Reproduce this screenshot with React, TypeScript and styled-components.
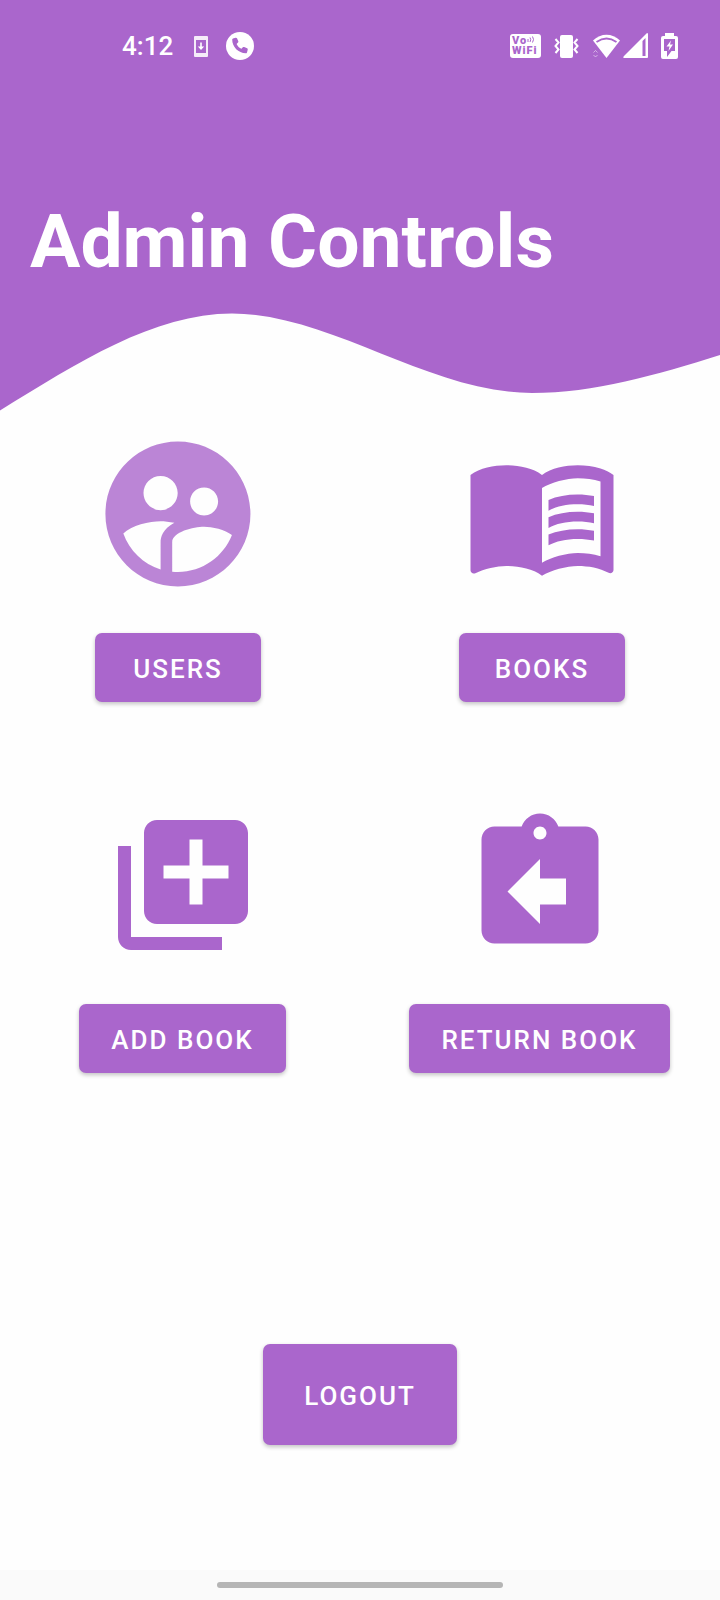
import React from "react";
import styled, { createGlobalStyle } from "styled-components";

const purple = "#aa66cc";

const GlobalStyle = createGlobalStyle`
  *, *::before, *::after { box-sizing: border-box; }
  body {
    margin: 0;
    background: #fefefe;
    font-family: Roboto, "Liberation Sans", sans-serif;
  }
`;

const Page = styled.div`
  display: flex;
  flex-direction: column;
  min-height: 100vh;
`;

const Header = styled.header`
  display: flex;
  flex-direction: column;
  background: ${purple};
  color: #fff;
`;

const StatusBar = styled.div`
  display: flex;
  justify-content: space-between;
  align-items: center;
  height: 92px;
  padding: 0 42px 0 122px;
`;

const StatusGroup = styled.div<{ $gap: number }>`
  display: flex;
  align-items: center;
  gap: ${(p) => p.$gap}px;
`;

const Clock = styled.time`
  font-size: 26px;
  line-height: 32px;
  font-weight: 500;
`;

const SignalPair = styled.div`
  display: flex;
  align-items: center;
  gap: 2px;
`;

const Glyph = styled.svg`
  display: block;
  flex: none;
`;

const VoWifi = styled.div`
  display: flex;
  flex-direction: column;
  width: 31px;
  height: 24px;
  padding: 2px 0 0 2px;
  border-radius: 3px;
  background: #fff;
  color: ${purple};
  font-size: 11px;
  line-height: 10px;
  font-weight: 900;
  letter-spacing: 1px;
`;

const VoLine = styled.div`
  display: flex;
`;

const Title = styled.h1`
  margin: 0;
  padding: 105px 30px 27px;
  font-size: 75px;
  line-height: 88px;
  font-weight: 700;
`;

const Wave = styled.svg`
  display: block;
  width: 100%;
  height: 100px;
`;

const Main = styled.main`
  display: flex;
  flex: 1;
  flex-direction: column;
  padding-top: 15px;
`;

const TileRow = styled.section<{ $gap: number; $pad: string }>`
  display: grid;
  grid-template-columns: 1fr 1fr;
  column-gap: ${(p) => p.$gap}px;
  padding: ${(p) => p.$pad};
`;

const Tile = styled.div`
  display: flex;
  flex-direction: column;
  align-items: center;
`;

const IconSlot = styled.div<{ $height: number }>`
  display: flex;
  align-items: center;
  height: ${(p) => p.$height}px;
`;

const Button = styled.button<{ $tall?: boolean; $top?: number }>`
  min-width: 166px;
  height: ${(p) => (p.$tall ? 101 : 69)}px;
  margin-top: ${(p) => p.$top ?? 0}px;
  padding: 3px ${(p) => (p.$tall ? 41 : 32)}px 0;
  border: 0;
  border-radius: 7px;
  background: ${purple};
  color: #fff;
  font-family: inherit;
  font-size: 26px;
  line-height: 32px;
  font-weight: 500;
  letter-spacing: 2px;
  text-transform: uppercase;
  box-shadow: 0 2px 4px rgba(0, 0, 0, 0.24);
  cursor: pointer;
`;

const LogoutArea = styled.div`
  display: flex;
  justify-content: center;
  margin-top: auto;
  padding: 64px 0 125px;
`;

const NavBar = styled.footer`
  display: flex;
  justify-content: center;
  height: 30px;
  padding-top: 12px;
  background: #fafafa;
`;

const Handle = styled.div`
  width: 286px;
  height: 6px;
  border-radius: 3px;
  background: #b5b5b5;
`;

function TileIcon({ d, size, opacity = 1 }: { d: string; size: number; opacity?: number }) {
  return (
    <Glyph width={size} height={size} viewBox="0 0 24 24" fill={purple} fillOpacity={opacity} aria-hidden="true">
      <path d={d} />
    </Glyph>
  );
}

const usersPath =
  "M11.99 2c-5.52 0-10 4.48-10 10s4.48 10 10 10 10-4.48 10-10-4.48-10-10-10zm3.61 6.34c1.07 0 1.93.86 1.93 1.93 0 1.07-.86 1.93-1.93 1.93-1.07 0-1.93-.86-1.93-1.93-.01-1.07.86-1.93 1.93-1.93zm-6-1.58c1.3 0 2.36 1.06 2.36 2.36 0 1.3-1.06 2.36-2.36 2.36s-2.36-1.06-2.36-2.36c0-1.31 1.05-2.36 2.36-2.36zm0 9.13v3.75c-2.4-.75-4.3-2.6-5.14-4.96 1.05-1.12 3.67-1.69 5.14-1.69.53 0 1.2.08 1.9.22-1.64.87-1.9 2.02-1.9 2.68zM11.99 20c-.27 0-.53-.01-.79-.04v-4.07c0-1.42 2.94-2.13 4.4-2.13 1.07 0 2.92.39 3.84 1.15-1.17 2.97-4.06 5.09-7.45 5.09z";
const booksPath =
  "M21 5c-1.11-.35-2.33-.5-3.5-.5-1.95 0-4.05.4-5.5 1.5-1.45-1.1-3.55-1.5-5.5-1.5S2.45 4.9 1 6v14.65c0 .25.25.5.5.5.1 0 .15-.05.25-.05C3.1 20.45 5.05 20 6.5 20c1.95 0 4.05.4 5.5 1.5 1.35-.85 3.8-1.5 5.5-1.5 1.65 0 3.35.3 4.75 1.05.1.05.15.05.25.05.25 0 .5-.25.5-.5V6c-.6-.45-1.25-.75-2-1zm0 13.5c-1.1-.35-2.3-.5-3.5-.5-1.7 0-4.15.65-5.5 1.5V8c1.35-.85 3.8-1.5 5.5-1.5 1.2 0 2.4.15 3.5.5v11.5zM17.5 10.5c.88 0 1.73.09 2.5.26V9.24c-.79-.15-1.64-.24-2.5-.24-1.7 0-3.24.29-4.5.83v1.66c1.13-.64 2.7-.99 4.5-.99zM13 12.49v1.66c1.13-.64 2.7-.99 4.5-.99.88 0 1.73.09 2.5.26V11.9c-.79-.15-1.64-.24-2.5-.24-1.7 0-3.24.3-4.5.83zM17.5 14.33c-1.7 0-3.24.29-4.5.83v1.66c1.13-.64 2.7-.99 4.5-.99.88 0 1.73.09 2.5.26v-1.52c-.79-.16-1.64-.24-2.5-.24z";
const addPath =
  "M4 6H2v14c0 1.1.9 2 2 2h14v-2H4V6zm16-4H8c-1.1 0-2 .9-2 2v12c0 1.1.9 2 2 2h12c1.1 0 2-.9 2-2V4c0-1.1-.9-2-2-2zm-1 9h-4v4h-2v-4H9V9h4V5h2v4h4v2z";
const returnPath =
  "M19 3h-4.18C14.4 1.84 13.3 1 12 1c-1.3 0-2.4.84-2.82 2H5c-1.1 0-2 .9-2 2v14c0 1.1.9 2 2 2h14c1.1 0 2-.9 2-2V5c0-1.1-.9-2-2-2zm-7 0c.55 0 1 .45 1 1s-.45 1-1 1-1-.45-1-1 .45-1 1-1zm4 12h-4v3l-5-5 5-5v3h4v4z";

export default function App() {
  return (
    <Page>
      <GlobalStyle />
      <Header>
        <StatusBar>
          <StatusGroup $gap={21}>
            <Clock>4:12</Clock>
            <StatusGroup $gap={18}>
              <Glyph width="14" height="21" viewBox="0 0 14 21" aria-hidden="true">
                <rect width="14" height="21" rx="1" fill="#fff" fillOpacity="0.88" />
                <rect x="2" y="4" width="10" height="13" fill={purple} />
                <path d="M6.200 6.500h1.600v4h2.400L7 14l-3.200-3.500h2.400z" fill="#fff" />
              </Glyph>
              <Glyph width="28" height="28" viewBox="0 0 28 28" aria-hidden="true">
                <circle cx="14" cy="14" r="14" fill="#fff" />
                <path
                  d="M7 6.500l2.600-.8c.6-.2 1.100.1 1.400.6l1.300 2.900c.2.500.1 1-.3 1.400l-1.400 1.300c1 2.200 2.700 3.900 4.900 4.900l1.300-1.500c.4-.4.9-.5 1.400-.3l2.900 1.300c.5.200.8.800.6 1.400l-.7 2.700c-.2.600-.7.900-1.200.9C12.400 21.300 6.200 15 6.200 7.600c0-.5.300-1 .8-1.100z"
                  fill={purple}
                />
              </Glyph>
            </StatusGroup>
          </StatusGroup>
          <StatusGroup $gap={13}>
            <VoWifi>
              <VoLine>
                <span>Vo</span>
                <Glyph width="8" height="7" viewBox="0 0 8 7" fill="none" stroke={purple} aria-hidden="true">
                  <path d="M1 3v3M3 1.500q1.500 2 0 4.500M5.500.5q2 3 0 6" />
                </Glyph>
              </VoLine>
              <span>WiFi</span>
            </VoWifi>
            <Glyph width="25" height="24" viewBox="0 0 25 24" aria-hidden="true">
              <rect x="6" y="1" width="13" height="23" rx="2" fill="#fff" />
              <path
                d="M1.500 5l3 3.500-3 3.500 3 3.500-3 3.500M23.500 5l-3 3.500 3 3.500-3 3.500 3 3.500"
                fill="none"
                stroke="#fff"
                strokeWidth="2"
              />
            </Glyph>
            <SignalPair>
              <Glyph width="29" height="26" viewBox="0 0 29 26" aria-hidden="true">
                <path d="M1 7.500C9-.2 20-.2 28 7.500L14.500 25z" fill="#fff" />
                <path d="M4.500 9q10-7 20 0" fill="none" stroke={purple} strokeWidth="1.800" />
                <path d="M1.500 19.500l2-2 2 2M1.500 22l2 2 2-2" fill="none" stroke="#fff" strokeOpacity="0.5" />
              </Glyph>
              <Glyph width="25" height="26" viewBox="0 0 25 26" aria-hidden="true">
                <path d="M24 0a1 1 0 0 1 1 1v23a1 1 0 0 1-1 1H1q-1.500-.5 0-2z" fill="#fff" />
                <path d="M19.500 8l3-3v18h-3z" fill={purple} />
              </Glyph>
            </SignalPair>
            <Glyph width="17" height="26" viewBox="0 0 17 26" aria-hidden="true">
              <path
                d="M4 0h9v3h2a2 2 0 0 1 2 2v19a2 2 0 0 1-2 2H2a2 2 0 0 1-2-2V5a2 2 0 0 1 2-2h2z"
                fill="#fff"
              />
              <path d="M3 6h11v12H10.500L6 24v-6H3z" fill={purple} />
              <path d="M10 7.500L5.500 13.500h3L7.500 18l4.500-6.500H9z" fill="#fff" />
            </Glyph>
          </StatusGroup>
        </StatusBar>
        <Title>Admin Controls</Title>
        <Wave viewBox="0 0 720 100" preserveAspectRatio="none" aria-hidden="true">
          <path d="M0 98.500C77 51 154 1.500 232 1.500 330 1.500 430 81 532 81 594 81 656 63 720 43V100H0z" fill="#fefefe" />
        </Wave>
      </Header>
      <Main>
        <TileRow $gap={8} $pad="0 0 105px">
          <Tile>
            <IconSlot $height={174}>
              <TileIcon d={usersPath} size={174} opacity={0.8} />
            </IconSlot>
            <Button type="button" $top={32}>Users</Button>
          </Tile>
          <Tile>
            <IconSlot $height={174}>
              <TileIcon d={booksPath} size={156} />
            </IconSlot>
            <Button type="button" $top={32}>Books</Button>
          </Tile>
        </TileRow>
        <TileRow $gap={0} $pad="0 2px 0 4px">
          <Tile>
            <IconSlot $height={156}>
              <TileIcon d={addPath} size={156} />
            </IconSlot>
            <Button type="button" $top={41}>Add Book</Button>
          </Tile>
          <Tile>
            <IconSlot $height={156}>
              <TileIcon d={returnPath} size={156} />
            </IconSlot>
            <Button type="button" $top={41}>Return Book</Button>
          </Tile>
        </TileRow>
        <LogoutArea>
          <Button type="button" $tall>Logout</Button>
        </LogoutArea>
      </Main>
      <NavBar>
        <Handle />
      </NavBar>
    </Page>
  );
}
